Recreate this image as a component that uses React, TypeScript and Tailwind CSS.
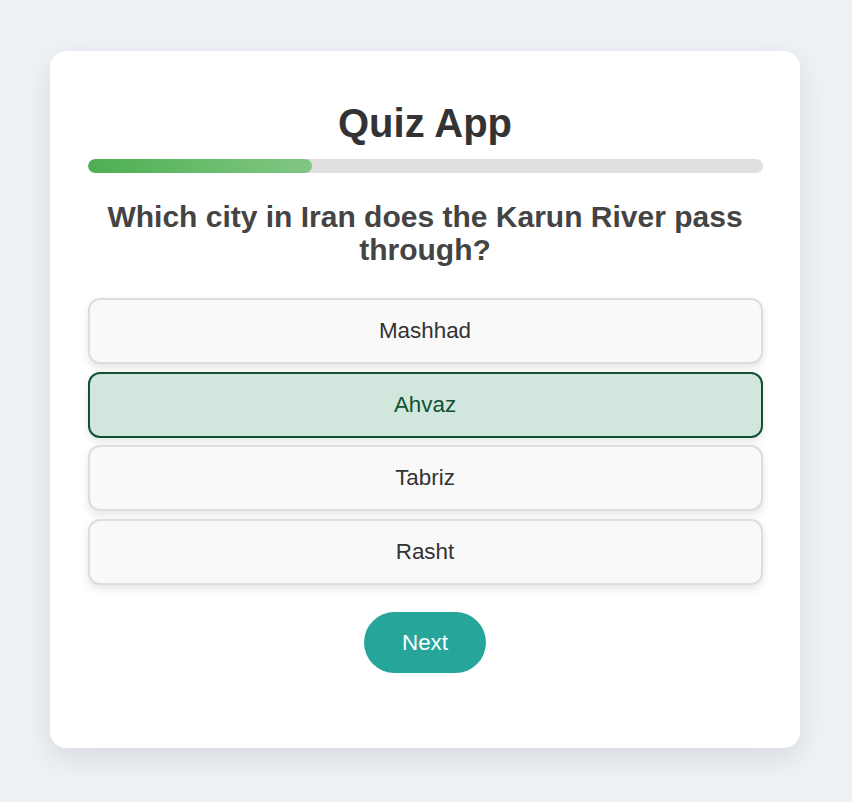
const options = ["Mashhad", "Ahvaz", "Tabriz", "Rasht"];

const OptionButton = ({ label, selected }: { label: string; selected: boolean }) => (
  <button
    className={
      selected
        ? "w-full rounded-[12px] border-2 border-[#0f5132] bg-[#d1e7dd] py-[19px] text-[22.4px] leading-[24px] text-[#0f5132] shadow-[0_4px_8px_rgba(0,0,0,0.1)]"
        : "w-full rounded-[12px] border-2 border-[#dddddd] bg-[#f9f9f9] py-[19px] text-[22.4px] leading-[24px] text-[#333333] shadow-[0_4px_8px_rgba(0,0,0,0.1)]"
    }
  >
    {label}
  </button>
);

export default function App() {
  const progress = 33.33;

  return (
    <div className="min-h-[802px] bg-[#eef2f6] pt-[51px] font-['Liberation_Sans',Arial,sans-serif]">
      <div className="ml-[50px] w-[750px] rounded-[16px] bg-white px-[37.5px] pt-[49px] pb-[75px] shadow-[0_10px_30px_rgba(0,0,0,0.1)]">
        <h1 className="text-center text-[40px] font-bold leading-[46px] text-[#333333]">Quiz App</h1>

        <div className="mt-[13px] h-[14px] w-full overflow-hidden rounded-full bg-[#e0e0e0]">
          <div
            className="h-full rounded-full bg-gradient-to-r from-[#4caf50] to-[#81c784]"
            style={{ width: `${progress}%` }}
          />
        </div>

        <h2 className="mt-[27px] text-center text-[30px] font-bold leading-[33px] text-[#444444]">
          Which city in Iran does the Karun River pass through?
        </h2>

        <div className="mt-[32px] flex flex-col gap-[7.67px]">
          {options.map((opt) => (
            <OptionButton key={opt} label={opt} selected={opt === "Ahvaz"} />
          ))}
        </div>

        <div className="mt-[27px] flex justify-center">
          <button className="rounded-full bg-[#26a69a] px-[38px] py-[17px] text-[22.4px] leading-[27px] text-white">
            Next
          </button>
        </div>
      </div>
    </div>
  );
}
